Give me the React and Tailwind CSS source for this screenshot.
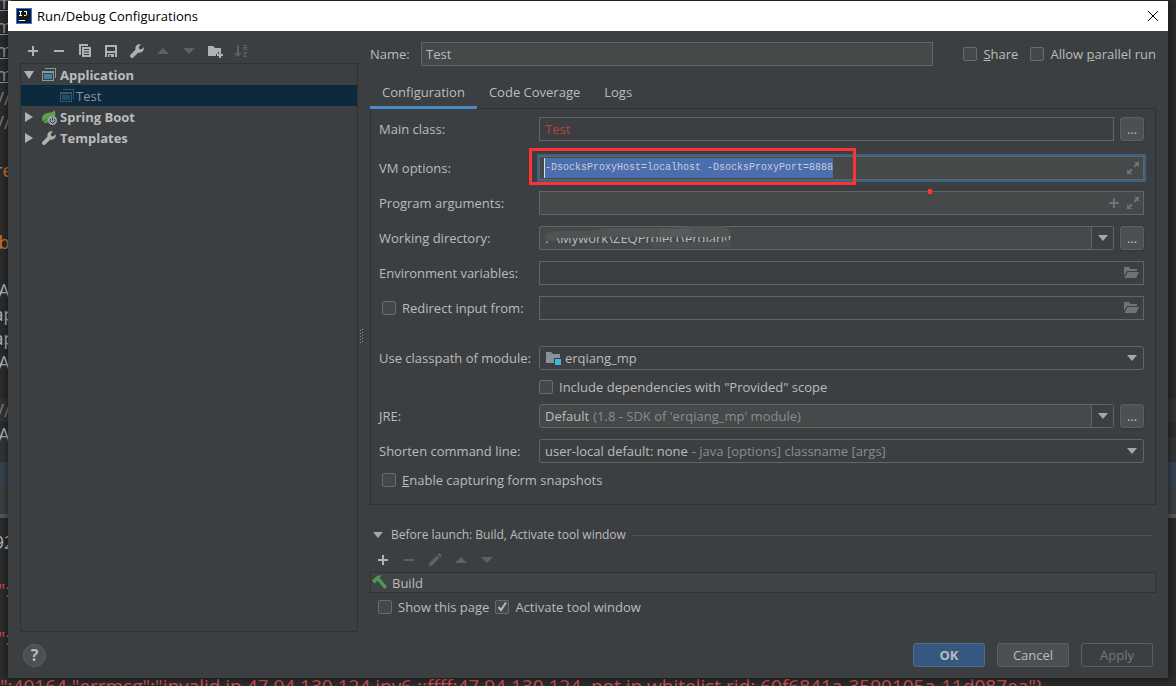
import React, { useState } from 'react';
import clsx from 'clsx';

const editorLines = [
  { text: 'm', color: 'text-[#8a93a3] underline' },
  { text: 'm', color: 'text-[#8a93a3] underline' },
  { text: 'm', color: 'text-[#8a93a3] underline' },
  { text: 'm', color: 'text-[#8a93a3] underline' },
  { text: '//', color: 'text-[#808080]' },
  { text: '//', color: 'text-[#808080]' },
  { text: '', color: '' },
  { text: 're', color: 'text-[#cc7832]' },
  { text: '', color: '' },
  { text: '', color: '' },
  { text: 'b', color: 'text-[#cc7832]' },
  { text: '', color: '' },
  { text: 'A', color: 'text-[#a9b7c6]' },
  { text: 'ap', color: 'text-[#a9b7c6]' },
  { text: 'ap', color: 'text-[#a9b7c6]' },
  { text: 'A', color: 'text-[#a9b7c6]' },
  { text: '', color: '' },
  { text: '//', color: 'text-[#808080] bg-[#323232]' },
];

/* ---------- Icons ---------- */

const Icon = ({ children, className = 'text-[#afb1b3]' }) => (
  <svg viewBox="0 0 16 16" className={clsx('size-4 shrink-0', className)} fill="currentColor" aria-hidden="true">
    {children}
  </svg>
);

const PlusIcon = (props) => (
  <Icon {...props}>
    <path d="M7 3h2v4h4v2H9v4H7V9H3V7h4z" />
  </Icon>
);

const MinusIcon = (props) => (
  <Icon {...props}>
    <path d="M3 7h10v2H3z" />
  </Icon>
);

const CopyIcon = () => (
  <Icon>
    <path d="M2 1h9v2H4v9H2z" />
    <path fillRule="evenodd" d="M5 4h9v10H5zM7 6v1h5V6zm0 2.5v1h5v-1zM7 11v1h5v-1z" />
  </Icon>
);

const SaveIcon = () => (
  <Icon>
    <path fillRule="evenodd" d="M2 2h12v12h-2v-4H4v4H2zM4 4v4h8V4z" />
    <path fillRule="evenodd" d="M5 11h6v3H5zM6.500 12v2h1.500v-2z" />
  </Icon>
);

const WrenchIcon = () => (
  <Icon>
    <path d="M14.600 4.300l-2.300 2.200-2-.6-.6-2 2.200-2.300c-1.600-.6-3.300-.2-4.400.9C6.400 3.600 6.100 5.200 6.600 6.600L1.300 12c-.5.500-.5 1.300 0 1.800l.9.900c.5.500 1.300.5 1.800 0l5.400-5.300c1.400.5 3 .2 4.100-.9 1.100-1.100 1.600-2.700 1.100-4.200z" />
  </Icon>
);

const UpIcon = () => (
  <Icon className="text-[#5e6062]">
    <path d="M8 5l6 6H2z" />
  </Icon>
);

const DownIcon = () => (
  <Icon className="text-[#5e6062]">
    <path d="M2 5h12l-6 6z" />
  </Icon>
);

const NewFolderIcon = () => (
  <Icon>
    <path d="M1 3h5l2 2h6v4h-3v2H9v2H1z" />
    <path d="M12 9h2v2h2v2h-2v2h-2v-2h-2v-2h2z" />
  </Icon>
);

const SortIcon = () => (
  <Icon className="text-[#5e6062]">
    <path d="M4 2h2v8h3l-4 4-4-4h3z" />
    <path d="M10 2h4v5h-4V4h3V3h-3zm1 3v1h2V5z" fillRule="evenodd" />
    <path d="M10 9h4v1l-2.500 3H14v1h-4v-1l2.500-3H10z" />
  </Icon>
);

const PencilIcon = () => (
  <Icon className="text-[#5e6062]">
    <path d="M2 11.300L9.800 3.500l2.700 2.700L4.700 14H2zM10.600 2.700l1.300-1.300c.3-.3.700-.3 1 0l1.700 1.700c.3.300.3.700 0 1l-1.300 1.300z" />
  </Icon>
);

const AppIcon = ({ dim }) => (
  <Icon className={dim ? 'text-[#35566d]' : 'text-[#8b979f]'}>
    <path d="M4 1h11v10h-1V2H4z" />
    <path fillRule="evenodd" d="M1 4h12v10H1zM2 6v7h10V6z" />
    <path d="M3 7h8v5H3z" className={dim ? 'text-[#1d4f6b]' : 'text-[#3e86a0]'} fill="currentColor" />
  </Icon>
);

const SpringIcon = () => (
  <Icon>
    <path
      fill="#5fa04e"
      d="M13.500 1c-1 2-3 2.300-5.500 2.700C3.500 4.300 1 6 1 9.500c0 1.300.3 2.300 1 3.200C3 11 5 10 7 9.400 4.800 10.500 3 12 2.600 13.300c1.300.9 3 .9 4.200.3C7 10.200 9 7.600 14 7.600c.6-2.400.4-4.600-.5-6.600z"
    />
    <circle cx="11.500" cy="11.500" r="4.500" fill="#9aa7b0" />
    <path d="M9.800 9.800a2.400 2.400 0 1 0 3.400 0M11.500 8.500v3" fill="none" stroke="#3c3f41" strokeWidth="1" />
  </Icon>
);

const HammerIcon = () => (
  <Icon className="text-[#499c54]">
    <path d="M0 5.500L5 1l4.500-1L7.500 3 15 11.500 12.500 14 5.500 5.500 2.500 8.500z" />
  </Icon>
);

const ModuleIcon = () => (
  <Icon className="text-[#87939a]">
    <path d="M1 2h5l2 2h7v4H9v5H1z" />
    <path d="M10 9h6v6h-6z" fill="#40b6e0" />
  </Icon>
);

const ExpandIcon = () => (
  <Icon className="text-[#6e7375]">
    <path d="M9 2h5v5l-1.700-1.700-2.300 2.300-1.600-1.600 2.300-2.300zM2 9l1.700 1.700 2.300-2.300 1.600 1.600-2.300 2.300L7 14H2z" />
  </Icon>
);

const OpenFolderIcon = () => (
  <Icon className="text-[#6e7375]">
    <path d="M1 2h5l1.500 2H14v2H4L1 11z" />
    <path d="M4.600 7H16l-3 6H1.500z" />
  </Icon>
);

const ArrowIcon = () => (
  <svg viewBox="0 0 10 6" className="h-1.5 w-2.5 shrink-0" fill="#a5a8aa" aria-hidden="true">
    <path d="M0 0h10L5 6z" />
  </svg>
);

/* ---------- Controls ---------- */

const Checkbox = ({ id, label, defaultChecked = false }) => (
  <label htmlFor={id} className="flex h-5 items-center gap-1.5">
    <span className="grid">
      <input
        id={id}
        type="checkbox"
        defaultChecked={defaultChecked}
        className="peer col-start-1 row-start-1 size-3.5 appearance-none rounded-xs border border-[#6b6b6b] bg-[#43494a]"
      />
      <svg
        viewBox="0 0 14 14"
        className="pointer-events-none invisible col-start-1 row-start-1 size-3.5 peer-checked:visible"
        fill="none"
        stroke="#b4b6b8"
        strokeWidth="2"
      >
        <path d="M3.500 7L6 10l5-7.500" />
      </svg>
    </span>
    <span>{label}</span>
  </label>
);

const Row = ({ htmlFor, label, className, children }) => (
  <div className={clsx('flex items-center', className)}>
    <div className="w-[160px] shrink-0">
      {htmlFor ? <label htmlFor={htmlFor}>{label}</label> : label}
    </div>
    <div className="flex min-w-0 flex-1 items-center gap-1.5">{children}</div>
  </div>
);

const Field = ({ className, children }) => (
  <div className={clsx('flex h-6 min-w-0 flex-1 items-center border border-[#646464]', className)}>{children}</div>
);

const MoreButton = ({ label }) => (
  <button
    type="button"
    aria-label={label}
    className="h-6 w-6 shrink-0 rounded-[3px] border border-[#5e6060] bg-[#4c5052] leading-5 shadow-sm"
  >
    ...
  </button>
);

const ToolButton = ({ label, children }) => (
  <button type="button" aria-label={label} title={label}>
    {children}
  </button>
);

const TreeArrow = ({ open }) => (
  <svg viewBox="0 0 10 10" className="size-2.5 shrink-0" fill="#afb1b3" aria-hidden="true">
    <path d={open ? 'M0 1h10L5 9z' : 'M1 0v10l8-5z'} />
  </svg>
);

/* ---------- Sections ---------- */

const EditorBackdrop = () => (
  <div className="absolute inset-0 overflow-hidden text-lg" aria-hidden="true">
    <div className="-mt-2.5">
      {editorLines.map((line, i) => (
        <div key={i} className={clsx('h-6 leading-6', line.color)}>
          <div className="flex w-2 justify-center">{line.text}</div>
        </div>
      ))}
    </div>
    <div className="h-4 text-[#a9b7c6]">
      <div className="flex w-2 justify-center leading-6">A</div>
    </div>
    <div className="h-6 bg-[#313335]" />
    <div className="h-6 bg-[#37424f]" />
    <div className="h-7 bg-[#3c3f41]" />
    <div className="h-1 bg-[#555759]" />
    <div className="mt-3 h-6 leading-6 text-[#bbbbbb]">
      <div className="flex w-2 justify-center">92</div>
    </div>
    <div className="mt-6 h-6 leading-6 text-[#d25252]">
      <div className="flex w-2 justify-center">":</div>
    </div>
    <div className="mt-6 h-6 leading-6 text-[#d25252]">
      <div className="flex w-2 justify-center">":</div>
    </div>
    <div className="mt-6 h-6 text-[19px] leading-6 whitespace-nowrap text-[#d25252]">
      ":40164,"errmsg":"invalid ip 47.94.130.124 ipv6 ::ffff:47.94.130.124, not in whitelist rid: 60f6841a-3590105a-11d087ea"{'}'}
    </div>
  </div>
);

const TitleBar = () => (
  <header className="flex h-[30px] shrink-0 items-center bg-white px-2 text-black">
    <svg viewBox="0 0 16 16" className="mr-[5px] size-4" aria-hidden="true">
      <path d="M0 0h16v16H0z" fill="#1e7ff0" />
      <path d="M1 1h14v14H1z" fill="#16181c" />
      <path d="M3 3.500h3M4.500 3v5M3 7.500h3M8 3.500h3M10.500 3v3.500Q10.500 7.500 9.500 7.500H8M3 12.500h6" fill="none" stroke="#fff" strokeWidth="1" />
    </svg>
    <h1 className="flex-1">Run/Debug Configurations</h1>
    <button type="button" aria-label="Close" className="p-0.5">
      <svg viewBox="0 0 10 10" className="size-2.5" stroke="#000" strokeWidth="1" aria-hidden="true">
        <path d="M0 0l10 10M10 0L0 10" />
      </svg>
    </button>
  </header>
);

const Sidebar = () => (
  <aside className="flex w-[338px] shrink-0 flex-col">
    <div className="flex h-[25px] shrink-0 items-center gap-2.5 px-[5px]">
      <ToolButton label="Add"><PlusIcon /></ToolButton>
      <ToolButton label="Remove"><MinusIcon /></ToolButton>
      <ToolButton label="Copy"><CopyIcon /></ToolButton>
      <ToolButton label="Save"><SaveIcon /></ToolButton>
      <ToolButton label="Edit templates"><WrenchIcon /></ToolButton>
      <ToolButton label="Move up"><UpIcon /></ToolButton>
      <ToolButton label="Move down"><DownIcon /></ToolButton>
      <ToolButton label="New folder"><NewFolderIcon /></ToolButton>
      <ToolButton label="Sort"><SortIcon /></ToolButton>
    </div>
    <ul className="flex-1 border border-[#323232] leading-[18px] font-bold">
      <li>
        <div className="flex h-[21px] items-center gap-0.5 pl-[3px]">
          <TreeArrow open />
          <span className="ml-[5px] flex items-center gap-[3px]"><AppIcon /> Application</span>
        </div>
        <ul>
          <li className="flex h-[21px] items-center gap-px bg-[#0d293e] pl-[38px] font-normal text-[#8c9299]">
            <AppIcon dim /> Test
          </li>
        </ul>
      </li>
      <li className="flex h-[21px] items-center gap-0.5 pl-[3px]">
        <TreeArrow />
        <span className="ml-[5px] flex items-center gap-[3px]"><SpringIcon /> Spring Boot</span>
      </li>
      <li className="flex h-[21px] items-center gap-0.5 pl-[3px]">
        <TreeArrow />
        <span className="ml-[5px] flex items-center gap-[3px]"><WrenchIcon /> Templates</span>
      </li>
    </ul>
  </aside>
);

const Splitter = () => (
  <div className="flex w-3 shrink-0 items-center pt-0.5 pl-px">
    <svg viewBox="0 0 4 14" className="h-3.5 w-1" fill="#8a8c8e" aria-hidden="true">
      <path d="M3 0h1v1H3zM1 1h1v1H1zM3 3h1v1H3zM1 4h1v1H1zM3 6h1v1H3zM1 7h1v1H1zM3 9h1v1H3zM1 10h1v1H1zM3 12h1v1H3zM1 13h1v1H1z" />
    </svg>
  </div>
);

const VmOptions = () => (
  <div className="relative flex min-w-0 flex-1">
    <Field className="bg-[#45494a] pr-0.5 pl-1 outline-2 outline-[#3d6185]">
      <input
        id="vm-options"
        defaultValue="-DsocksProxyHost=localhost -DsocksProxyPort=8888"
        className="h-5 min-w-0 border-l border-[#dddddd] bg-[#4b6eaf] font-['Liberation_Mono',monospace] text-[10px] text-[#c8cdd4] outline-none [field-sizing:content]"
      />
      <span className="ml-auto"><ExpandIcon /></span>
    </Field>
    <div className="pointer-events-none absolute -top-2 -left-2.5 h-[37px] w-[327px] border-3 border-[#fd3433]" />
    <div className="pointer-events-none absolute top-[33px] left-[389px] h-[5px] w-1 bg-[#fd3433]" />
  </div>
);

const WorkingDirectory = () => (
  <Field className="relative rounded-xs bg-[#45494a] pl-[5px]">
    <input
      id="working-dir"
      defaultValue=":  \Mywork\ZEQProject\erqiang"
      className="h-full min-w-0 flex-1 bg-transparent outline-none"
    />
    <button type="button" aria-label="Recent directories" className="flex h-full w-[22px] items-center justify-center border-l border-[#646464] bg-[#3c3f41]">
      <ArrowIcon />
    </button>
    {/* smudge strokes hiding the path */}
    <svg viewBox="0 0 200 24" className="pointer-events-none absolute -top-px left-0 h-6 w-[200px]" aria-hidden="true">
      <path d="M5 10q0-4 12-5h34l14-3h30v9H62l-20 1H17v3H8q-3 0-3-5z" fill="#505354" />
      <path d="M70 2h60l20-2h34q6 3 6 8 1 3-3 3H70z" fill="#515455" />
      <path d="M120 3h30v8h-30z" fill="#575a5b" />
      <path d="M110 16h74l4-3q6 4 2 8l-30 1h-46q-4-2-4-6z" fill="#4c4f50" />
    </svg>
  </Field>
);

const SelectField = ({ id, options, hint, icon, editable }) => (
  <Field className={clsx('rounded-[3px]', editable && 'bg-[#45494a]')}>
    <div className="flex min-w-0 flex-1 items-center pl-[5px]">
      {icon}
      <select
        id={id}
        className={clsx('appearance-none bg-transparent outline-none', hint ? '[field-sizing:content]' : 'ml-1 flex-1')}
      >
        {options.map((option) => (
          <option key={option}>{option}</option>
        ))}
      </select>
      {hint && <span className="ml-1 truncate text-[#8c8c8c]">{hint}</span>}
    </div>
    <span className={clsx('flex h-full w-[22px] items-center justify-center', editable && 'border-l border-[#646464] bg-[#3c3f41]')}>
      <ArrowIcon />
    </span>
  </Field>
);

const ConfigurationPanel = () => (
  <section className="-mt-px border border-[#323232] pt-2 pr-[11px] pb-3.5 pl-2">
    <Row htmlFor="main-class" label="Main class:">
      <Field>
        <input id="main-class" defaultValue="Test" className="h-full min-w-0 flex-1 bg-transparent px-[5px] text-[#bc3f3c] outline-none" />
      </Field>
      <MoreButton label="Choose main class" />
    </Row>
    <Row htmlFor="vm-options" label="VM options:" className="mt-[15px]">
      <VmOptions />
    </Row>
    <Row htmlFor="program-args" label="Program arguments:" className="mt-[11px]">
      <Field className="gap-[3px] bg-[#45494a] pr-0.5">
        <input id="program-args" className="h-full min-w-0 flex-1 bg-transparent px-[5px] outline-none" />
        <PlusIcon className="text-[#6e7375]" />
        <ExpandIcon />
      </Field>
    </Row>
    <Row htmlFor="working-dir" label="Working directory:" className="mt-[11px]">
      <WorkingDirectory />
      <MoreButton label="Choose working directory" />
    </Row>
    <Row htmlFor="env-vars" label="Environment variables:" className="mt-[11px]">
      <Field className="pr-1">
        <input id="env-vars" className="h-full min-w-0 flex-1 bg-transparent px-[5px] outline-none" />
        <OpenFolderIcon />
      </Field>
    </Row>
    <Row label={<div className="pl-[3px]"><Checkbox id="redirect" label="Redirect input from:" /></div>} className="mt-[11px]">
      <Field className="pr-1">
        <input aria-label="Redirect input from" className="h-full min-w-0 flex-1 bg-transparent px-[5px] outline-none" />
        <OpenFolderIcon />
      </Field>
    </Row>
    <Row htmlFor="module" label="Use classpath of module:" className="mt-[26px]">
      <SelectField id="module" options={['erqiang_mp']} icon={<ModuleIcon />} />
    </Row>
    <Row className="my-[7px]">
      <Checkbox id="provided" label={'Include dependencies with "Provided" scope'} />
    </Row>
    <Row htmlFor="jre" label="JRE:">
      <SelectField id="jre" options={['Default']} hint="(1.8 - SDK of 'erqiang_mp' module)" editable />
      <MoreButton label="Choose JRE" />
    </Row>
    <Row htmlFor="shorten" label="Shorten command line:" className="mt-[11px]">
      <SelectField id="shorten" options={['user-local default: none']} hint="- java [options] classname [args]" />
    </Row>
    <div className="mt-[7px] flex pl-[3px]">
      <Checkbox id="snapshots" label={<><u>E</u>nable capturing form snapshots</>} />
    </div>
  </section>
);

const BeforeLaunch = () => (
  <section className="mt-5">
    <div className="flex h-5 items-center pr-[3px] pl-[3px]">
      <ArrowIcon />
      <h2 className="ml-2 text-xs">Before launch: Build, Activate tool window</h2>
      <div className="ml-1.5 h-px flex-1 bg-[#515355]" />
    </div>
    <div className="mt-[7px] flex h-4 items-center gap-2.5 px-[5px]">
      <ToolButton label="Add task"><PlusIcon /></ToolButton>
      <ToolButton label="Remove task"><MinusIcon className="text-[#5e6062]" /></ToolButton>
      <ToolButton label="Edit task"><PencilIcon /></ToolButton>
      <ToolButton label="Move task up"><UpIcon /></ToolButton>
      <ToolButton label="Move task down"><DownIcon /></ToolButton>
    </div>
    <ul className="mt-1 border border-[#323232] bg-[#414446] leading-[18px]">
      <li className="flex h-[19px] items-center gap-1 pl-px"><HammerIcon /> Build</li>
    </ul>
    <div className="mt-1 flex gap-1.5 pl-2">
      <Checkbox id="show-page" label="Show this page" />
      <Checkbox id="activate" label="Activate tool window" defaultChecked />
    </div>
  </section>
);

const tabs = ['Configuration', 'Code Coverage', 'Logs'];

export default function App() {
  const [tab, setTab] = useState('Configuration');

  return (
    <div className="relative min-h-screen overflow-hidden bg-[#2b2b2b] font-['Open_Sans','Noto_Sans',sans-serif]">
      <EditorBackdrop />
      <div className="relative flex min-h-screen flex-col px-2 pt-px pb-2 text-[13px] leading-5 text-[#bbbbbb]">
        <main className="flex flex-1 flex-col bg-[#3c3f41] shadow-[0_0_8px_#00000099]">
          <TitleBar />
          <div className="flex flex-1 px-3 pt-[7px]">
            <Sidebar />
            <Splitter />
            <div className="min-w-0 flex-1 pt-1">
              <div className="flex h-6 items-center">
                <label htmlFor="name" className="w-[51px]">Name:</label>
                <input id="name" defaultValue="Test" className="mr-[30px] h-6 min-w-0 flex-1 border border-[#646464] bg-[#45494a] px-1 outline-none" />
                <div className="flex gap-3">
                  <Checkbox id="share" label={<><u>S</u>hare</>} />
                  <Checkbox id="parallel" label={<>Allow <u>p</u>arallel run</>} />
                </div>
              </div>
              <nav className="relative mt-3 flex h-[31px]">
                {tabs.map((name) => (
                  <button
                    key={name}
                    type="button"
                    onClick={() => setTab(name)}
                    className={clsx('border-b-3 px-3', tab === name ? 'border-[#4a88c7]' : 'border-transparent')}
                  >
                    {name}
                  </button>
                ))}
              </nav>
              <ConfigurationPanel />
              <BeforeLaunch />
            </div>
          </div>
          <footer className="flex items-center gap-3 py-[11px] pr-[15px] pl-[15px]">
            <button type="button" aria-label="Help" className="mr-auto size-[23px] rounded-full border border-[#5e6060] bg-[#4c5052] text-base leading-5 font-bold">
              ?
            </button>
            <button type="button" className="h-6 w-[72px] rounded-[3px] border border-[#4c708c] bg-[#365880] leading-5 font-bold">OK</button>
            <button type="button" className="h-6 w-[72px] rounded-[3px] border border-[#5e6060] bg-[#4c5052] leading-5">Cancel</button>
            <button type="button" disabled className="h-6 w-[72px] rounded-[3px] border border-[#5e6060] leading-5 text-[#777777]">Apply</button>
          </footer>
        </main>
      </div>
    </div>
  );
}
